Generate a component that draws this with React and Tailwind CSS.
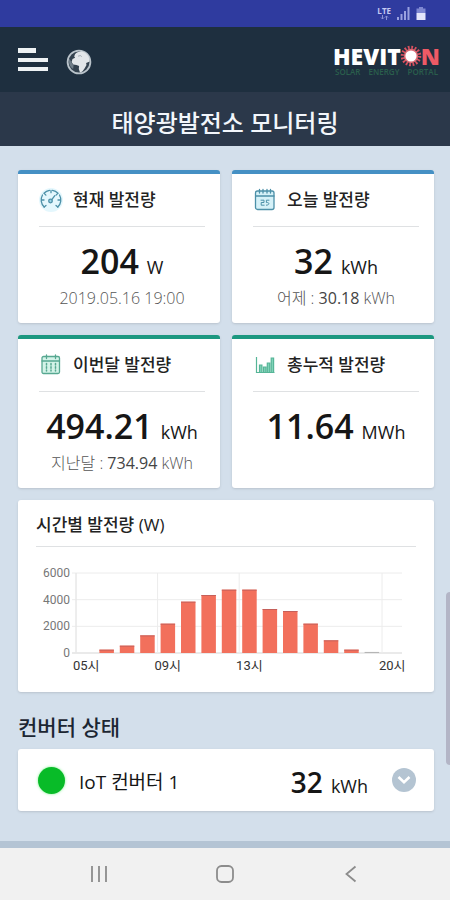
import { useState } from 'react';

const HOURLY = [0, 250, 550, 1320, 2200, 3850, 4350, 4750, 4750, 3300, 3150, 2200, 950, 250, 80, 0];
const HOUR_LABELS = [
  { index: 0, text: '05시' },
  { index: 4, text: '09시' },
  { index: 8, text: '13시' },
  { index: 15, text: '20시' },
];

function GaugeIcon() {
  return (
    <svg width="24" height="24" viewBox="0 0 24 24" fill="none" stroke="#4c90a8" strokeWidth="1.3" strokeLinecap="round">
      <circle cx="12" cy="12" r="12" fill="#e4f7fd" stroke="none" />
      <path d="M5.200 19A9.800 9.800 0 0 1 3.500 7M5 5.200A9.800 9.800 0 0 1 10.500 2.300M13.500 2.300A9.800 9.800 0 0 1 19 5.200M20.500 7A9.800 9.800 0 0 1 18.800 19" />
      <path d="M5.200 19l1.800-1.500M18.800 19L17 17.500M2.500 12h2.500M19 12h2.500M5.400 5.600l1.500 1.500M12 2.300v2.400M18.600 5.600l-1.500 1.500" />
      <circle cx="11.500" cy="13" r="1.800" fill="#9bd3e6" />
      <path d="M12.800 11.600l3-4" />
    </svg>
  );
}

function DayIcon() {
  return (
    <svg width="24" height="24" viewBox="0 0 24 24" fill="none" stroke="#4c90a8" strokeWidth="1.3" strokeLinecap="round">
      <rect x="2.500" y="3" width="18.500" height="18.500" rx="2" fill="#d5f1f8" />
      <path d="M3 8h18M6.500 1.500v3.500M10 1.500v3.500M14 1.500v3.500M17.500 1.500v3.500" />
      <path d="M8 12.200h3v2.300H8.200v2.700h3M16 12.200h-2.600v2.300c3.400-.3 3.400 2.700 0 2.700" strokeWidth="1" />
    </svg>
  );
}

function MonthIcon() {
  return (
    <svg width="24" height="24" viewBox="0 0 24 24" fill="none" stroke="#57a891" strokeWidth="1.3" strokeLinecap="round">
      <rect x="3" y="3.500" width="17.500" height="17" rx="1.500" fill="#d3f3e8" />
      <path d="M3 8h17.500M7.500 2v3.500M16.500 2v3.500" />
      <path d="M7.500 10.500v7.500M12 10.500v7.500M16.500 10.500v7.500" strokeDasharray="1.500 1.800" strokeWidth="1.500" />
    </svg>
  );
}

function TotalIcon() {
  return (
    <svg width="24" height="24" viewBox="0 0 24 24" fill="none" stroke="#56b597" strokeWidth="1.200">
      <path d="M3.500 4v15.500h18" />
      <path d="M6.500 19v-7h2.400v7M10.500 19v-5h2.400v5M14.300 19v-9h2.400v9M18.200 19V5h2.400v14" fill="#7fd3b8" />
    </svg>
  );
}

function GlobeIcon() {
  return (
    <svg width="26" height="26" viewBox="0 0 26 26">
      <circle cx="13" cy="13" r="11.400" fill="#33424f" stroke="#b9c3ca" strokeWidth="1.800" />
      <path
        fill="#e2e6e9"
        d="M9 5.200c1.600-2 4.300-3 7-2.600 3 .7 5.800 2.800 7 5.900l.6 3.900-1.600.8-1.900.8.400 2-1.800 3.300-2.300 3.300-2.400.9-1.200-3.600.3-3-2.600-1-3.300-.3-1.600-2.500.9-3.200 2.600-1.100-.9-1.300z"
      />
      <path d="M12 7.200l2.600-.7 1 1.400" fill="none" stroke="#a3adb5" strokeWidth="1" />
      <path d="M3.500 9.500l1.800 3.800 2.300 3.200-.5 3.600C3.500 17.500 2.300 13.500 3.500 9.500z" fill="#6f7d88" />
    </svg>
  );
}

function SunIcon() {
  return (
    <svg width="22" height="22" viewBox="0 0 22 22" className="-mx-px">
      <circle cx="11" cy="11" r="8.500" fill="none" stroke="#d9505f" strokeWidth="3.600" strokeDasharray="1.700 1.640" />
      <circle cx="11" cy="11" r="7.200" fill="#dd6b75" />
      <circle cx="11" cy="11" r="5.600" fill="#fff" />
    </svg>
  );
}

function StatusBar() {
  return (
    <div className="flex h-[27px] items-center justify-end gap-1.5 bg-[#2f3b9f] pr-6 text-[#c5c9f2]">
      <div className="flex flex-col items-center">
        <span className="text-[8px] leading-[8px] font-bold">LTE</span>
        <svg width="9" height="5" viewBox="0 0 9 5" fill="none" stroke="#8b93d6">
          <path d="M2.500 0v4M1 2.500l1.500 1.500L4 2.500M6.500 5V1M5 2.500L6.500 1 8 2.500" />
        </svg>
      </div>
      <svg width="13" height="13" viewBox="0 0 13 13" fill="#9aa1e0">
        <path d="M0 10h2v3H0zM3.500 7h2v6h-2zM7 4h2v9H7zM10.500 0h2v13h-2z" />
      </svg>
      <svg width="10" height="13" viewBox="0 0 10 13">
        <path d="M3 0h4v1.500h2.500V6h-9V1.500H3z" fill="#7f88d2" />
        <path d="M.5 6h9v7h-9z" fill="#e4e6fb" />
      </svg>
    </div>
  );
}

function Header() {
  return (
    <header>
      <div className="flex h-[65px] items-center justify-between bg-[#1e2f3f] pr-2.5 pl-[18px]">
        <div className="flex items-center gap-[18px]">
          <button type="button" aria-label="메뉴" className="flex h-[23px] w-[30px] flex-col justify-between">
            <span className="h-[5px] w-[18px] bg-[#eef2f4]" />
            <span className="h-1 w-full bg-[#eef2f4]" />
            <span className="h-1 w-full bg-[#eef2f4]" />
          </button>
          <button type="button" aria-label="언어" className="pt-1">
            <GlobeIcon />
          </button>
        </div>
        <a href="#" className="flex flex-col pt-0.5">
          <span className="flex items-center text-[23px] leading-[22px] font-extrabold text-white">
            HEVIT
            <SunIcon />
            <span className="text-[#ee5a66]">N</span>
          </span>
          <span className="flex justify-between px-0.5 text-[8px] leading-[10px] font-semibold text-[#2a5f4c]">
            <span>SOLAR</span>
            <span>ENERGY</span>
            <span>PORTAL</span>
          </span>
        </a>
      </div>
      <h1 className="flex h-[54px] items-center justify-center bg-[#2b384a] pt-2 text-[24px] font-medium text-[#f2f6fb]">
        태양광발전소 모니터링
      </h1>
    </header>
  );
}

function StatCard({ accent, icon, title, value, unit, children }) {
  return (
    <section className={`h-[153px] rounded-[3px] border-t-4 bg-white pr-[15px] pl-[21px] shadow-sm ${accent}`}>
      <h2 className="flex h-[53px] items-center gap-2.5 border-b border-[#dfe1e3] text-[17px] font-medium text-[#222]">
        {icon}
        {title}
      </h2>
      <p className="-mx-2 mt-3.5 flex items-baseline justify-center gap-2 leading-[40px] whitespace-nowrap text-[#161616]">
        <span className="text-[34px] font-semibold">{value}</span>
        <span className="text-[18px]">{unit}</span>
      </p>
      <p className="-mx-2 text-center text-[16px] leading-[22px] font-light whitespace-nowrap text-[#555]">{children}</p>
    </section>
  );
}

function HourlyChart() {
  const left = 40;
  const bottom = 106;
  const slot = 20.4;
  const y = (v) => bottom - (v / 6000) * 80;

  return (
    <svg viewBox="0 0 380 133" className="block w-full font-[Roboto,'Noto_Sans_CJK_KR',sans-serif]" role="img" aria-label="시간별 발전량">
      {[0, 2000, 4000, 6000].map((v) => (
        <g key={v}>
          <path d={`M${left - 4} ${y(v)}H366`} stroke={v === 0 ? '#d5d5d5' : '#ececec'} />
          <text x="34" y={y(v) + 4} textAnchor="end" fontSize="12" fill="#777">
            {v}
          </text>
        </g>
      ))}
      <path d={`M${left} 26V106`} stroke="#dedede" />
      {HOUR_LABELS.map(({ index, text }) => (
        <g key={text}>
          <path d={`M${left + index * slot} 26V106`} stroke="#ececec" />
          <text x={left + (index + 0.5) * slot} y="123" textAnchor="middle" fontSize="13" fill="#333">
            {text}
          </text>
        </g>
      ))}
      {HOURLY.map((v, i) => (
        <rect
          key={i}
          x={left + i * slot + 3}
          y={y(v)}
          width="14.5"
          height={bottom - y(v)}
          fill={v < 100 ? '#b5b5b5' : '#f2705c'}
        />
      ))}
      {HOURLY.map((v, i) => (
        v >= 100 && <path key={i} d={`M${left + i * slot + 3} ${y(v) + 0.5}h14.5`} stroke="#c5605a" />
      ))}
    </svg>
  );
}

function ConverterRow() {
  const [open, setOpen] = useState(false);

  return (
    <div className="flex h-[62px] items-center rounded-[3px] bg-white pr-[18px] pl-5 shadow-sm">
      <span className="size-[27px] rounded-full bg-[#08bb28] shadow-[0_0_3px_#7df08c]" />
      <span className="ml-3.5 pt-1 text-[19px] text-[#161616]">IoT 컨버터 1</span>
      <span className="ml-auto flex items-baseline gap-2 pt-1 text-[#161616]">
        <span className="text-[28px] font-semibold">32</span>
        <span className="text-[18px]">kWh</span>
      </span>
      <button
        type="button"
        aria-label="자세히"
        aria-expanded={open}
        onClick={() => setOpen(!open)}
        className="ml-6 flex size-6 items-center justify-center rounded-full bg-[#b4c4d2]"
      >
        <svg width="14" height="10" viewBox="0 0 14 10" fill="none" stroke="#fff" strokeWidth="2.600">
          <path d="M1.500 2L7 7.300 12.500 2" />
        </svg>
      </button>
    </div>
  );
}

function NavBar() {
  return (
    <nav className="flex h-[52px] items-center justify-around bg-[#f1f1f1] px-9">
      <button type="button" aria-label="최근 앱">
        <svg width="18" height="18" viewBox="0 0 18 18" stroke="#8c8c8c" strokeWidth="1.800">
          <path d="M2 1v16M9 1v16M16 1v16" />
        </svg>
      </button>
      <button type="button" aria-label="홈">
        <svg width="20" height="20" viewBox="0 0 20 20" fill="none" stroke="#8c8c8c" strokeWidth="1.800">
          <rect x="2" y="2" width="16" height="16" rx="4.500" />
        </svg>
      </button>
      <button type="button" aria-label="뒤로">
        <svg width="18" height="18" viewBox="0 0 18 18" fill="none" stroke="#8c8c8c" strokeWidth="1.800">
          <path d="M13.500 1.500L4.500 9l9 7.500" />
        </svg>
      </button>
    </nav>
  );
}

export default function App() {
  return (
    <div className="flex min-h-screen flex-col bg-[#d3dfeb] font-['Open_Sans','Noto_Sans_CJK_KR',sans-serif]">
      <StatusBar />
      <Header />
      <main className="relative flex-1 border-b-[7px] border-[#b4c4d4] pt-6 pr-4 pb-[30px] pl-[18px]">
        <div className="grid grid-cols-2 gap-3">
          <StatCard accent="border-[#4590c4]" icon={<GaugeIcon />} title="현재 발전량" value="204" unit="W">
            2019.05.16 19:00
          </StatCard>
          <StatCard accent="border-[#4590c4]" icon={<DayIcon />} title="오늘 발전량" value="32" unit="kWh">
            어제 : <b className="font-normal text-[#444]">30.18</b> kWh
          </StatCard>
          <StatCard accent="border-[#1c9880]" icon={<MonthIcon />} title="이번달 발전량" value="494.21" unit="kWh">
            지난달 : <b className="font-normal text-[#444]">734.94</b> kWh
          </StatCard>
          <StatCard accent="border-[#1c9880]" icon={<TotalIcon />} title="총누적 발전량" value="11.64" unit="MWh" />
        </div>

        <section className="mt-3 rounded-[3px] bg-white px-[18px] pb-3 shadow-sm">
          <h2 className="flex h-[47px] items-center border-b border-[#dfe1e3] pt-1 text-[17px] font-medium text-[#222]">
            시간별 발전량 (W)
          </h2>
          <HourlyChart />
        </section>

        <h2 className="mt-5 mb-[7px] text-[21px] leading-[30px] font-medium text-[#1c2632]">컨버터 상태</h2>
        <ConverterRow />

        {/* scroll thumb over the right edge */}
        <div className="absolute top-[446px] right-0 h-[173px] w-1 rounded-l bg-[#b3b5c6]" />
      </main>
      <NavBar />
    </div>
  );
}
